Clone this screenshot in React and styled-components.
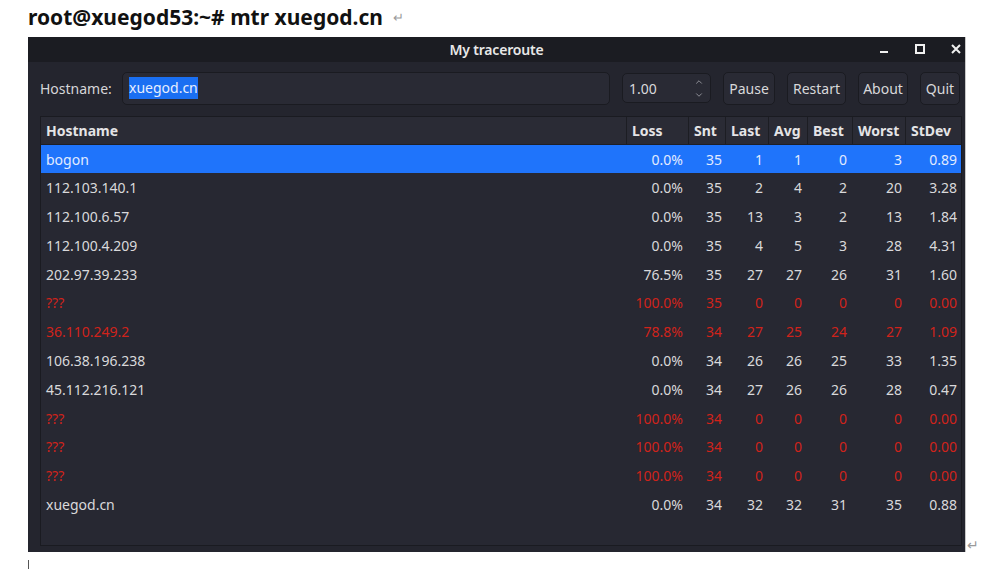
import React from 'react'
import styled, { createGlobalStyle } from 'styled-components'
import { ChevronUp, ChevronDown } from 'lucide-react'

const GlobalStyle = createGlobalStyle`
  html, body {
    margin: 0;
    padding: 0;
    background: #ffffff;
  }
  body {
    font-family: 'Noto Sans', 'Liberation Sans', sans-serif;
    overflow: hidden;
  }
`

const Page = styled.div`
  width: 983px;
  height: 569px;
  display: flex;
  flex-direction: column;
  overflow: hidden;
`

const Command = styled.div`
  height: 39px;
  padding-left: 28px;
  font-size: 21px;
  font-weight: 700;
  line-height: 34px;
  color: #111;
  white-space: nowrap;

  span {
    font-weight: 400;
    font-size: 13px;
    color: #9a9a9a;
    margin-left: 10px;
    vertical-align: 3px;
  }
`

const Shot = styled.div`
  display: flex;
  align-items: flex-end;
  padding-left: 28px;
`

const Window = styled.div`
  width: 937px;
  height: 515px;
  background: #24252e;
  display: flex;
  flex-direction: column;
  box-shadow: 1px 0 0 #c8c8c8;
`

const TitleBar = styled.div`
  height: 25px;
  background: #1b1c22;
  display: grid;
  grid-template-columns: 1fr auto 1fr;
  align-items: center;
  color: #e8e8e8;

  h1 {
    grid-column: 2;
    margin: 0;
    font-size: 14px;
    font-weight: 600;
    letter-spacing: -0.2px;
  }
`

const WinControls = styled.div`
  grid-column: 3;
  justify-self: end;
  display: flex;
  align-items: center;
  gap: 24px;
  padding-right: 3px;
  height: 100%;

  svg {
    display: block;
  }
`

const Body = styled.div`
  flex: 1;
  display: flex;
  flex-direction: column;
  padding: 10px 3px 6px 12px;
`

const Toolbar = styled.div`
  display: flex;
  align-items: center;
  height: 33px;
  gap: 12px;
  margin-bottom: 11px;
  color: #d6d6d8;
  font-size: 14px;
`

const Label = styled.label`
  width: 70px;
`

const Field = styled.div`
  box-sizing: border-box;
  height: ${p => p.$h || 33}px;
  width: ${p => p.$w}px;
  background: #292a34;
  border: 1px solid #1a1b21;
  border-radius: 5px;
  display: flex;
  align-items: center;
  padding: 0 6px;
  color: #d8d8da;
  font-size: 14px;
`

const Selected = styled.span`
  background: #1a6ff2;
  color: #e6eeff;
  padding: 1px 0 2px;
`

const Spin = styled.div`
  margin-left: auto;
  display: flex;
  flex-direction: column;
  align-items: center;
  color: #a0a1a8;
  gap: 3px;
`

const Button = styled.button`
  box-sizing: border-box;
  height: 33px;
  width: ${p => p.$w}px;
  background: #292a34;
  border: 1px solid #1a1b21;
  border-radius: 5px;
  color: #d8d8da;
  font-family: inherit;
  font-size: 14px;
  padding: 0;
`

const Table = styled.div`
  flex: 1;
  background: #272832;
  border: 1px solid #1a1b21;
  font-size: 14px;
  color: #d9d9db;
`

const cols = '585px 62px 37px 43px 39px 45px 53px 57px'

const HeadRow = styled.div`
  display: grid;
  grid-template-columns: ${cols};
  height: 27px;
  background: #2a2b35;
  border-bottom: 1px solid #1e1f26;

  div {
    display: flex;
    align-items: center;
    padding-left: 5px;
    font-weight: 700;
    color: #e4e4e6;
    border-left: 1px solid #1c1d23;
  }
  div:first-child {
    border-left: none;
  }
`

const Row = styled.div`
  display: grid;
  grid-template-columns: ${cols};
  height: 28.8px;
  align-items: center;
  background: ${p => (p.$active ? '#1f74fb' : 'transparent')};
  color: ${p => (p.$active ? '#e2ebff' : p.$bad ? '#d0231b' : '#d9d9db')};
`

const Cell = styled.div`
  text-align: ${p => (p.$left ? 'left' : 'right')};
  padding: ${p => (p.$left ? '0 0 0 5px' : `0 ${p.$pad || 5}px 0 0`)};
  white-space: nowrap;
`

const ReturnMark = styled.span`
  color: #9a9a9a;
  font-size: 14px;
  margin-left: 2px;
  margin-bottom: -2px;
`

const Cursor = styled.div`
  margin: 8px 0 0 28px;
  width: 1px;
  height: 10px;
  background: #555;
`

const hops = [
  ['bogon', '0.0%', 35, 1, 1, 0, 3, '0.89'],
  ['112.103.140.1', '0.0%', 35, 2, 4, 2, 20, '3.28'],
  ['112.100.6.57', '0.0%', 35, 13, 3, 2, 13, '1.84'],
  ['112.100.4.209', '0.0%', 35, 4, 5, 3, 28, '4.31'],
  ['202.97.39.233', '76.5%', 35, 27, 27, 26, 31, '1.60'],
  ['???', '100.0%', 35, 0, 0, 0, 0, '0.00'],
  ['36.110.249.2', '78.8%', 34, 27, 25, 24, 27, '1.09'],
  ['106.38.196.238', '0.0%', 34, 26, 26, 25, 33, '1.35'],
  ['45.112.216.121', '0.0%', 34, 27, 26, 26, 28, '0.47'],
  ['???', '100.0%', 34, 0, 0, 0, 0, '0.00'],
  ['???', '100.0%', 34, 0, 0, 0, 0, '0.00'],
  ['???', '100.0%', 34, 0, 0, 0, 0, '0.00'],
  ['xuegod.cn', '0.0%', 34, 32, 32, 31, 35, '0.88'],
]

const redHosts = ['???', '36.110.249.2']
const pads = [5, 3, 5, 5, 5, 3, 5]

const App = () => (
  <Page>
    <GlobalStyle />
    <Command>
      root@xuegod53:~# mtr xuegod.cn<span>↵</span>
    </Command>
    <Shot>
      <Window>
        <TitleBar>
          <h1>My traceroute</h1>
          <WinControls>
            <svg width="12" height="12" viewBox="0 0 12 12">
              <rect x="2" y="8" width="8" height="2" fill="#f0f0f0" />
            </svg>
            <svg width="12" height="12" viewBox="0 0 12 12">
              <rect x="2" y="2" width="8" height="8" fill="none" stroke="#f0f0f0" strokeWidth="2" />
            </svg>
            <svg width="12" height="12" viewBox="0 0 12 12">
              <path d="M2 2 L10 10 M10 2 L2 10" stroke="#f0f0f0" strokeWidth="2" />
            </svg>
          </WinControls>
        </TitleBar>
        <Body>
          <Toolbar>
            <Label>Hostname:</Label>
            <Field $w={488}>
              <Selected>xuegod.cn</Selected>
            </Field>
            <Field $w={89} $h={30}>
              1.00
              <Spin>
                <ChevronUp size={10} strokeWidth={2} />
                <ChevronDown size={10} strokeWidth={2} />
              </Spin>
            </Field>
            <Button $w={52}>Pause</Button>
            <Button $w={59}>Restart</Button>
            <Button $w={50}>About</Button>
            <Button $w={40}>Quit</Button>
          </Toolbar>
          <Table>
            <HeadRow>
              {['Hostname', 'Loss', 'Snt', 'Last', 'Avg', 'Best', 'Worst', 'StDev'].map(h => (
                <div key={h}>{h}</div>
              ))}
            </HeadRow>
            {hops.map((hop, i) => (
              <Row key={i} $active={i === 0} $bad={redHosts.includes(hop[0])}>
                <Cell $left>{hop[0]}</Cell>
                {hop.slice(1).map((v, j) => (
                  <Cell key={j} $pad={pads[j]}>
                    {v}
                  </Cell>
                ))}
              </Row>
            ))}
          </Table>
        </Body>
      </Window>
      <ReturnMark>↵</ReturnMark>
    </Shot>
    <Cursor />
  </Page>
)

export default App
